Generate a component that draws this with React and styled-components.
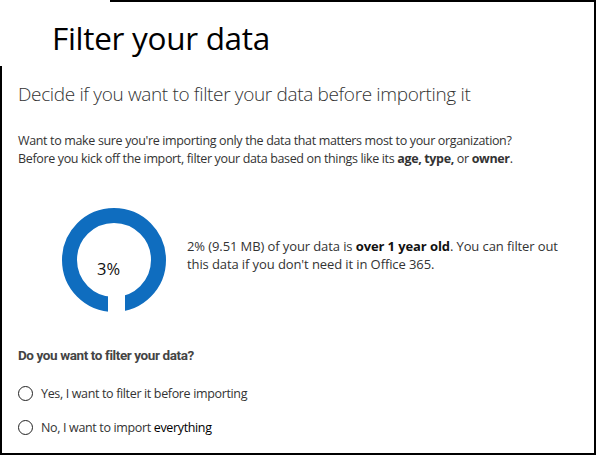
import React from 'react';
import styled, { createGlobalStyle } from 'styled-components';

const GlobalStyle = createGlobalStyle`
  html, body {
    margin: 0;
    padding: 0;
    background: #ffffff;
  }
  body {
    font-family: "Open Sans", "Noto Sans", sans-serif;
    color: #333333;
  }
`;

const Frame = styled.div`
  width: 596px;
  height: 455px;
  box-sizing: border-box;
  border-right: 2px solid #000;
  border-bottom: 2px solid #000;
  display: flex;
  flex-direction: column;
`;

const TopEdge = styled.div`
  margin-left: 110px;
  height: 2px;
  background: #000;
`;

const Header = styled.header`
  height: 64px;
  box-sizing: border-box;
  padding: 6px 0 0 52px;
  display: flex;
  align-items: center;
`;

const Title = styled.h1`
  margin: 0;
  font-size: 31.5px;
  font-weight: 400;
  color: #000;
  letter-spacing: -0.3px;
`;

const Body = styled.section`
  flex: 1;
  border-left: 2px solid #000;
  padding: 15px 0 0 16px;
`;

const Heading = styled.h2`
  margin: 0;
  font-size: 19px;
  font-weight: 300;
  color: #333;
  letter-spacing: -0.35px;
`;

const Intro = styled.p`
  margin: 25px 0 0;
  font-size: 12.5px;
  line-height: 18px;
  color: #333;
  letter-spacing: -0.35px;
  b {
    font-weight: 700;
  }
`;

const Stat = styled.div`
  display: flex;
  align-items: flex-start;
  gap: 20px;
  margin: 39px 0 0 43px;
`;

const Donut = styled.div`
  position: relative;
  width: 106px;
  height: 106px;
  flex: none;
  display: flex;
  align-items: center;
  justify-content: center;
  svg {
    position: absolute;
    inset: 0;
  }
`;

const DonutLabel = styled.span`
  position: relative;
  font-size: 16.5px;
  color: #111;
  margin: 16px 0 0 -11px;
`;

const StatText = styled.p`
  margin: 30px 0 0;
  font-size: 13px;
  line-height: 18px;
  color: #333;
  letter-spacing: -0.1px;
  b {
    font-weight: 700;
    color: #111;
  }
`;

const Question = styled.h3`
  margin: 34px 0 0;
  font-family: Roboto, "Open Sans", sans-serif;
  font-size: 13.5px;
  font-weight: 700;
  color: #444;
  letter-spacing: -0.4px;
`;

const Options = styled.div`
  display: flex;
  flex-direction: column;
  gap: 17px;
  margin-top: 22px;
`;

const Option = styled.label`
  display: flex;
  align-items: center;
  gap: 8px;
  font-size: 12.5px;
  color: #333;
  letter-spacing: -0.35px;
  cursor: pointer;
  em {
    font-style: normal;
    color: #000;
  }
`;

const Radio = styled.span`
  width: 15px;
  height: 15px;
  box-sizing: border-box;
  border: 1.5px solid #222;
  border-radius: 50%;
  flex: none;
`;

function Ring() {
  return (
    <svg width="106" height="106" viewBox="0 0 106 106">
      <circle cx="53" cy="53" r="44.5" fill="none" stroke="#0f6dbf" strokeWidth="15" />
      <rect x="47" y="80" width="17" height="26" fill="#fff" />
    </svg>
  );
}

export default function App() {
  return (
    <>
      <GlobalStyle />
      <Frame>
        <TopEdge />
        <Header>
          <Title>Filter your data</Title>
        </Header>
        <Body>
          <Heading>Decide if you want to filter your data before importing it</Heading>
          <Intro>
            Want to make sure you're importing only the data that matters most to your organization?
            <br />
            Before you kick off the import, filter your data based on things like its <b>age, type,</b> or <b>owner</b>.
          </Intro>
          <Stat>
            <Donut>
              <Ring />
              <DonutLabel>3%</DonutLabel>
            </Donut>
            <StatText>
              2% (9.51 MB) of your data is <b>over 1 year old</b>. You can filter out
              <br />
              this data if you don't need it in Office 365.
            </StatText>
          </Stat>
          <Question>Do you want to filter your data?</Question>
          <Options>
            <Option>
              <Radio />
              Yes, I want to filter it before importing
            </Option>
            <Option>
              <Radio />
              <span>No, I want to import <em>everything</em></span>
            </Option>
          </Options>
        </Body>
      </Frame>
    </>
  );
}
